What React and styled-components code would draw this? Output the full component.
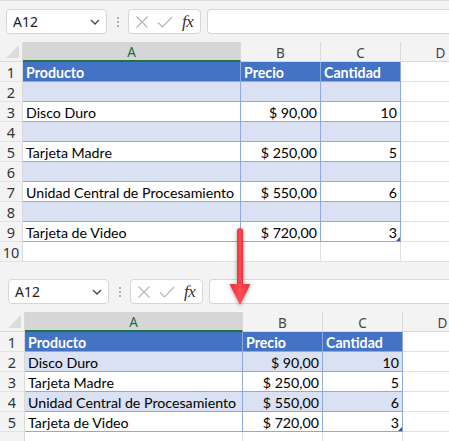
import React from "react";
import styled, { createGlobalStyle } from "styled-components";

const Global = createGlobalStyle`
  html, body { margin: 0; padding: 0; background: #ffffff; }
  body { font-family: "Lato", "Liberation Sans", sans-serif; }
  * { box-sizing: border-box; }
`;

const Page = styled.div`
  position: relative;
  width: 449px;
  height: 441px;
  overflow: hidden;
  background: #f3f3f3;
  display: flex;
  flex-direction: column;
  gap: 8px;
`;

const Sheet = styled.div`
  display: flex;
  flex-direction: column;
  border-top: 1px solid ${(p) => (p.$first ? "#dcdcdc" : "#f3f3f3")};
`;

const FormulaBar = styled.div`
  height: 41px;
  display: flex;
  align-items: flex-start;
  padding-top: 8px;
  padding-left: ${(p) => p.$left}px;
  background: #f3f3f3;
`;

const NameBox = styled.div`
  width: 101px;
  height: 25px;
  background: #fff;
  border: 1px solid #d6d6d6;
  border-radius: 4px;
  display: flex;
  align-items: center;
  justify-content: space-between;
  padding: 0 6px 0 6px;
  font-family: "Noto Sans", "Open Sans", sans-serif;
  font-size: 14px;
  color: #222;
`;

const Dots = styled.div`
  width: 21px;
  display: flex;
  flex-direction: column;
  align-items: center;
  justify-content: center;
  gap: 2px;
  height: 25px;
  span {
    width: 2px;
    height: 2px;
    background: #9a9a9a;
    border-radius: 1px;
  }
`;

const IconBox = styled.div`
  width: 73px;
  height: 25px;
  background: #fff;
  border: 1px solid #d6d6d6;
  border-radius: 4px;
  display: flex;
  align-items: center;
  padding: 0 4px 0 6px;
  gap: 8px;
`;

const Fx = styled.span`
  font-family: "Liberation Serif", "DejaVu Serif", serif;
  font-style: italic;
  font-size: 17px;
  color: #333;
  margin-left: 1px;
  letter-spacing: -0.5px;
`;

const Input = styled.div`
  flex: 1;
  height: 25px;
  margin-left: 6px;
  background: #fff;
  border: 1px solid #d6d6d6;
  border-right: none;
  border-radius: 4px 0 0 4px;
`;

const Grid = styled.div`
  display: grid;
  grid-template-columns: ${(p) => p.$cols};
  grid-auto-rows: 20px;
  background: #fff;
`;

const Corner = styled.div`
  background: #f3f3f3;
  border-right: 1px solid #d9d9d9;
  border-bottom: 1px solid #d9d9d9;
  position: relative;
  &::after {
    content: "";
    position: absolute;
    right: 3px;
    bottom: 3px;
    width: 0;
    height: 0;
    border-left: 13px solid transparent;
    border-bottom: 13px solid #dcdcdc;
  }
`;

const ColHead = styled.div`
  background: ${(p) => (p.$sel ? "#d6d6d6" : "#f3f3f3")};
  border-right: 1px solid #d9d9d9;
  border-bottom: ${(p) => (p.$sel ? "2px solid #217346" : "1px solid #d9d9d9")};
  color: ${(p) => (p.$sel ? "#1e6b40" : "#444")};
  font-family: "Noto Sans", sans-serif;
  font-size: 13.5px;
  display: flex;
  align-items: center;
  justify-content: center;
  padding-top: 2px;
  white-space: nowrap;
  overflow: hidden;
`;

const RowHead = styled.div`
  background: #f3f3f3;
  border-right: 1px solid #d9d9d9;
  border-bottom: 1px solid #e3e3e3;
  color: #333;
  font-family: "Noto Sans", sans-serif;
  font-size: 14.5px;
  display: flex;
  align-items: center;
  justify-content: center;
  padding-top: 1px;
`;

const kindBg = {
  head: "#4472c4",
  band: "#d9e1f2",
  plain: "#ffffff",
  out: "#ffffff",
};

const Cell = styled.div`
  position: relative;
  background: ${(p) => kindBg[p.$kind]};
  border-right: 1px solid ${(p) => (p.$kind === "out" ? "#e1e1e1" : "#8ea9db")};
  border-bottom: 1px solid ${(p) => (p.$kind === "out" ? "#e1e1e1" : "#8ea9db")};
  color: ${(p) => (p.$kind === "head" ? "#fff" : "#000")};
  font-weight: ${(p) => (p.$kind === "head" ? 700 : 400)};
  font-size: 14.2px;
  line-height: 19px;
  padding: 1px 3px 0 3px;
  text-align: ${(p) => (p.$right ? "right" : "left")};
  white-space: nowrap;
  overflow: hidden;
`;

const Handle = styled.span`
  position: absolute;
  right: 0;
  bottom: 0;
  width: 4px;
  height: 4px;
  background: #2f55a4;
  clip-path: polygon(100% 0, 100% 100%, 0 100%);
`;

const ArrowWrap = styled.svg`
  position: absolute;
  left: 226px;
  top: 224px;
  filter: drop-shadow(0 1px 2px rgba(0, 0, 0, 0.35));
`;

const XIcon = () => (
  <svg width="14" height="14" viewBox="0 0 14 14">
    <path d="M1.5 1.5 L12.5 12.5 M12.5 1.5 L1.5 12.5" stroke="#b4b4b4" strokeWidth="1.1" fill="none" />
  </svg>
);

const CheckIcon = () => (
  <svg width="16" height="14" viewBox="0 0 16 14">
    <path d="M1 7.5 L5.5 12 L15 2" stroke="#b4b4b4" strokeWidth="1.1" fill="none" />
  </svg>
);

const Chevron = () => (
  <svg width="10" height="6" viewBox="0 0 10 6">
    <path d="M1 1 L5 5 L9 1" stroke="#444" strokeWidth="1.3" fill="none" />
  </svg>
);

const Bar = ({ left }) => (
  <FormulaBar $left={left}>
    <NameBox>
      <span>A12</span>
      <Chevron />
    </NameBox>
    <Dots>
      <span />
      <span />
      <span />
    </Dots>
    <IconBox>
      <XIcon />
      <CheckIcon />
      <Fx>fx</Fx>
    </IconBox>
    <Input />
  </FormulaBar>
);

const topRows = [
  { kind: "head", cells: ["Producto", "Precio", "Cantidad"] },
  { kind: "band", cells: ["", "", ""] },
  { kind: "plain", cells: ["Disco Duro", "$ 90,00", "10"] },
  { kind: "band", cells: ["", "", ""] },
  { kind: "plain", cells: ["Tarjeta Madre", "$ 250,00", "5"] },
  { kind: "band", cells: ["", "", ""] },
  { kind: "plain", cells: ["Unidad Central de Procesamiento", "$ 550,00", "6"] },
  { kind: "band", cells: ["", "", ""] },
  { kind: "plain", cells: ["Tarjeta de Video", "$ 720,00", "3"], last: true },
  { kind: "out", cells: ["", "", ""] },
];

const bottomRows = [
  { kind: "head", cells: ["Producto", "Precio", "Cantidad"] },
  { kind: "band", cells: ["Disco Duro", "$ 90,00", "10"] },
  { kind: "plain", cells: ["Tarjeta Madre", "$ 250,00", "5"] },
  { kind: "band", cells: ["Unidad Central de Procesamiento", "$ 550,00", "6"] },
  { kind: "plain", cells: ["Tarjeta de Video", "$ 720,00", "3"], last: true },
];

const SheetGrid = ({ rows, cols, extraRow }) => (
  <Grid $cols={cols}>
    <Corner />
    <ColHead $sel>A</ColHead>
    <ColHead>B</ColHead>
    <ColHead>C</ColHead>
    <ColHead>D</ColHead>
    {rows.map((r, i) => (
      <React.Fragment key={i}>
        <RowHead>{i + 1}</RowHead>
        {r.cells.map((c, j) => (
          <Cell key={j} $kind={r.kind} $right={r.kind !== "head" && j > 0}>
            {c}
            {r.last && j === 2 && <Handle />}
          </Cell>
        ))}
        <Cell $kind="out" />
      </React.Fragment>
    ))}
    {extraRow && (
      <>
        <RowHead />
        <Cell $kind="out" />
        <Cell $kind="out" />
        <Cell $kind="out" />
        <Cell $kind="out" />
      </>
    )}
  </Grid>
);

export default function App() {
  return (
    <>
      <Global />
      <Page>
        <Sheet $first>
          <Bar left={6} />
          <SheetGrid rows={topRows} cols="23px 218px 80px 80px 80px" />
        </Sheet>
        <Sheet>
          <Bar left={8} />
          <SheetGrid rows={bottomRows} cols="25px 218px 80px 80px 80px" extraRow />
        </Sheet>
        <ArrowWrap width="30" height="86" viewBox="0 0 30 86">
          <defs>
            <linearGradient id="rg" x1="0" x2="1" y1="0" y2="0">
              <stop offset="0" stopColor="#e8333b" />
              <stop offset="0.5" stopColor="#ff4a52" />
              <stop offset="1" stopColor="#e8333b" />
            </linearGradient>
          </defs>
          <rect x="11" y="4" width="6" height="60" rx="3" fill="url(#rg)" />
          <path d="M3.5 60 L24.5 60 L14 81 Z" fill="url(#rg)" />
        </ArrowWrap>
      </Page>
    </>
  );
}
